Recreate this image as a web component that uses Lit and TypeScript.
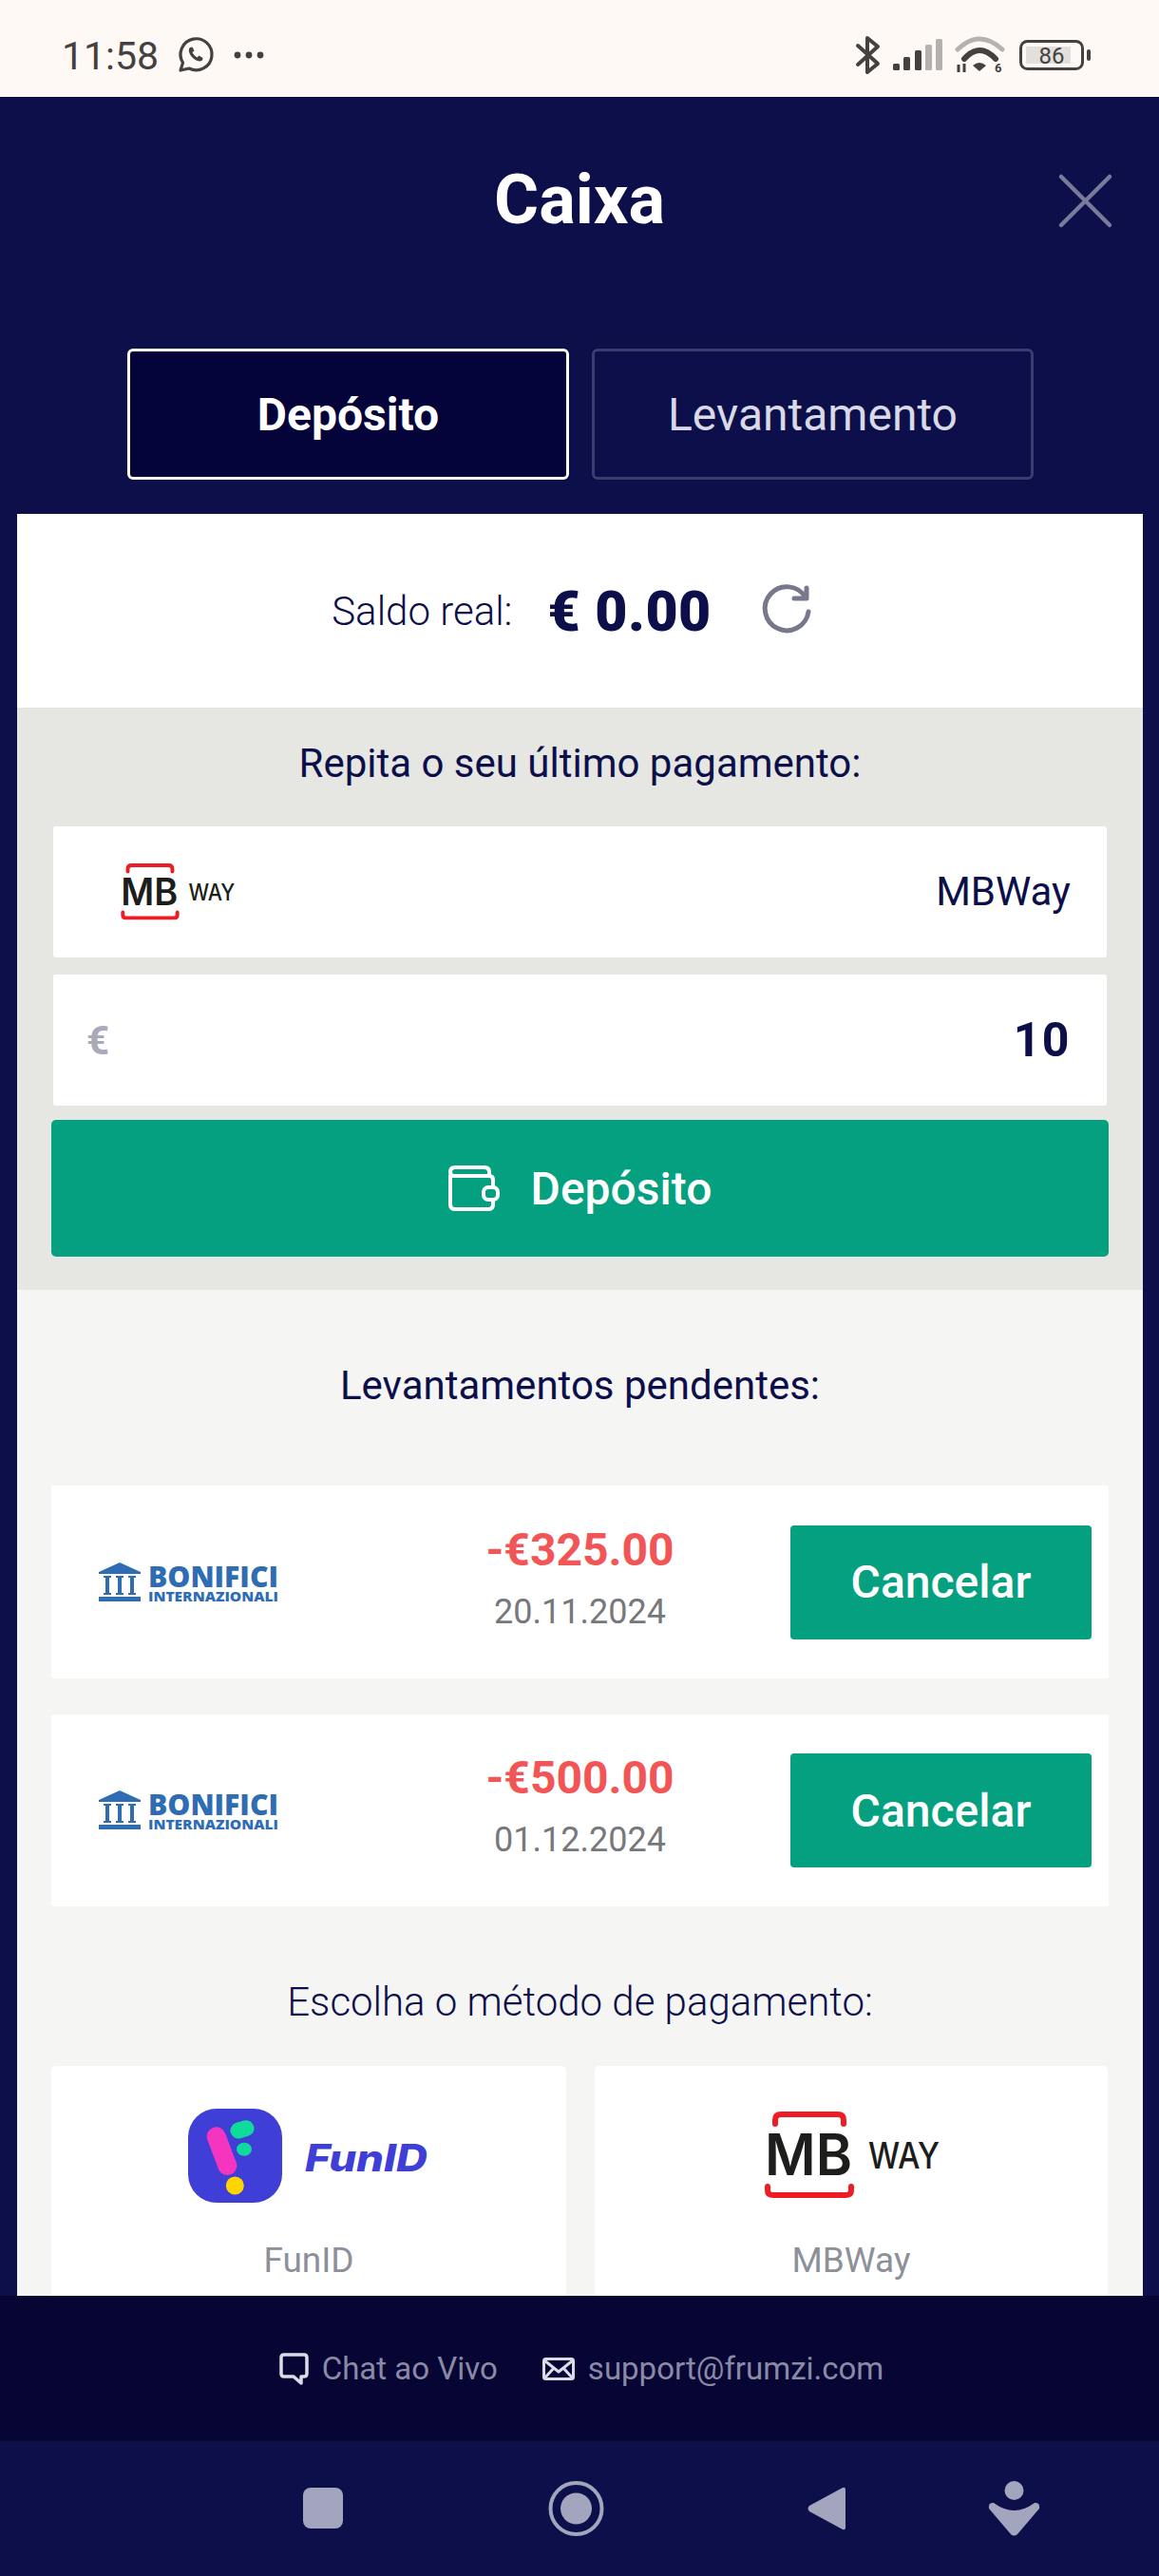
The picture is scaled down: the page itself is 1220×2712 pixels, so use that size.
import { LitElement, html, css } from "lit";
import { customElement } from "lit/decorators.js";

const mbLogo = (w: number, h: number) => html`<svg width=${w} height=${h} viewBox="0 0 185 92">
  <path d="M12 13V9Q12 3 18 3H78Q84 3 84 9V13" fill="none" stroke="#ee1c25" stroke-width="6" stroke-linecap="round"/>
  <path d="M4 79V83Q4 88 10 88H86Q92 88 92 83V79" fill="none" stroke="#ee1c25" stroke-width="6" stroke-linecap="round"/>
  <text x="1" y="67" font-family="Inter, sans-serif" font-size="60" font-weight="600" fill="#1d1d1b" textLength="92" lengthAdjust="spacingAndGlyphs">MB</text>
  <text x="110" y="60" font-family="Inter, sans-serif" font-size="38" font-weight="500" fill="#1d1d1b" textLength="75" lengthAdjust="spacingAndGlyphs">WAY</text>
</svg>`;

const bankLogo = html`<svg width="190" height="42" viewBox="0 0 190 42">
  <path d="M22 0L44 10V12H0V10Z" fill="#2e6db4"/>
  <rect x="0" y="36" width="44" height="5" fill="#2e6db4"/>
  <g fill="#2e6db4">
    <rect x="5" y="14" width="8" height="2"/><rect x="7" y="16" width="4" height="16"/><rect x="5" y="32" width="8" height="2"/>
    <rect x="18" y="14" width="8" height="2"/><rect x="20" y="16" width="4" height="16"/><rect x="18" y="32" width="8" height="2"/>
    <rect x="31" y="14" width="8" height="2"/><rect x="33" y="16" width="4" height="16"/><rect x="31" y="32" width="8" height="2"/>
  </g>
  <text x="52" y="26" font-family="'Open Sans', sans-serif" font-size="30" font-weight="800" fill="#2e6db4" textLength="137" lengthAdjust="spacingAndGlyphs">BONIFICI</text>
  <text x="52" y="41" font-family="'Open Sans', sans-serif" font-size="13.500" font-weight="800" fill="#2e6db4" textLength="137" lengthAdjust="spacingAndGlyphs">INTERNAZIONALI</text>
</svg>`;

const funLogo = html`<svg width="252" height="100" viewBox="0 0 252 100">
  <rect width="99" height="99" rx="30" fill="#3f3fd8"/>
  <path d="M29.7 29.3L41.3 60" stroke="#f535c0" stroke-width="20" stroke-linecap="round"/>
  <path d="M53 23L61 20.7" stroke="#0fdc9b" stroke-width="17" stroke-linecap="round"/>
  <ellipse cx="59" cy="42.7" rx="8" ry="7" fill="#0fdc9b"/>
  <circle cx="49.3" cy="81" r="9.5" fill="#ffd500"/>
  <text x="123" y="66" font-family="Inter, sans-serif" font-size="39" font-weight="800" font-style="italic" fill="#3f3fd8" textLength="129" lengthAdjust="spacingAndGlyphs">FunID</text>
</svg>`;

@customElement("app-root")
export class AppRoot extends LitElement {
  static styles = css`
    :host { display: flex; flex-direction: column; width: 1220px; height: 2712px; overflow: hidden; background: #0c0f4a; font-family: Roboto, sans-serif; color: #0c0f4a; }
    svg { display: block; flex: none; overflow: visible; }
    .status { height: 102px; flex: none; background: #fef9f5; display: flex; align-items: center; padding: 0 72px 0 65px; color: #444140; box-sizing: border-box; }
    .time { font-size: 41px; line-height: 46px; margin-right: 20px; margin-top: 15px; }
    .status svg { margin-top: 14px; }
    .dots { margin-left: 21px; }
    .spacer { flex: 1; }
    .stat-r { display: flex; align-items: center; }
    .ml13 { margin-left: 13px; }
    .ml14 { margin-left: 14px; }
    .ml16 { margin-left: 16px; }
    .head-row { flex: none; height: 218px; box-sizing: border-box; display: grid; grid-template-columns: 1fr auto 1fr; align-items: center; }
    .title { font-size: 72px; line-height: 84px; font-weight: 700; color: #fff; grid-column: 2; }
    .close { justify-self: end; margin-right: 49px; }
    .tabs-wrap { flex: none; height: 221px; padding: 47px 0 0 134px; box-sizing: border-box; display: flex; gap: 24px; }
    .tab { width: 465px; height: 138px; box-sizing: border-box; border-radius: 6px; display: flex; align-items: center; justify-content: center; font-size: 48px; }
    .tab.on { background: #05043a; border: 3px solid #fff; color: #fff; font-weight: 700; }
    .tab.off { border: 3px solid #3a3d70; color: #d9dae6; }
    .panel { flex: 1; min-height: 0; overflow: hidden; margin: 0 17px 0 18px; background: #f5f5f4; display: flex; flex-direction: column; }
    .balance { flex: none; height: 204px; background: #fff; display: flex; align-items: center; justify-content: center; box-sizing: border-box; padding-right: 18px; }
    .saldo { font-size: 42px; font-weight: 300; margin-right: 37px; }
    .amount { font-size: 59px; font-weight: 900; margin-right: 53px; letter-spacing: 0.5px; }
    .last { flex: none; background: #e6e6e3; height: 613px; padding: 0 36px; box-sizing: border-box; display: flex; flex-direction: column; }
    .last h2 { margin: 32px 0 0; text-align: center; font-size: 42px; line-height: 54px; font-weight: 400; height: 93px; }
    .row { height: 138px; flex: none; margin: 0 2px; background: #fff; border-radius: 3px; display: flex; align-items: center; justify-content: space-between; box-sizing: border-box; padding: 0 37px; }
    .row.method { padding-left: 70px; padding-right: 38px; margin-bottom: 18px; }
    .row .name { font-size: 42px; margin-top: -2px; }
    .row .eur { font-size: 42px; font-weight: 700; color: #a9aab9; }
    .row .val { font-size: 50px; font-weight: 700; letter-spacing: 1.5px; }
    .row.amt { margin-bottom: 15px; padding-right: 38px; padding-left: 35px; }
    .cta { height: 144px; flex: none; background: #04a080; border-radius: 5px; color: #fff; font-size: 48px; font-weight: 500; display: flex; align-items: center; justify-content: center; gap: 33px; padding-right: 0; box-sizing: border-box; }
    .pending { flex: 1; padding: 0 36px; display: flex; flex-direction: column; }
    .pending h2 { margin: 0; font-weight: 400; text-align: center; font-size: 42px; line-height: 54px; }
    .pending h2.p1 { margin-top: 74px; margin-bottom: 78px; }
    .pending h2.p2 { margin-top: 74px; margin-bottom: 40px; font-weight: 300; }
    .card { flex: none; height: 203px; background: #fff; border-radius: 3px; display: grid; grid-template-columns: 1fr auto 1fr; align-items: center; margin-bottom: 38px; }
    .card.last-c { margin-bottom: 0; height: 202px; }
    .card .logo { padding-left: 50px; }
    .mid { text-align: center; margin-top: -6px; }
    .mid .sum { font-size: 48px; line-height: 54px; font-weight: 700; color: #f25555; }
    .mid .date { font-size: 36px; line-height: 48px; margin-top: 14px; color: #77787c; }
    .cancel { justify-self: end; margin-right: 18px; width: 317px; height: 120px; background: #04a080; border-radius: 4px; color: #fff; font-size: 48px; font-weight: 500; display: flex; align-items: center; justify-content: center; }
    .methods { display: grid; grid-template-columns: 542px 540px; gap: 30px; flex: none; }
    .m { background: #fff; border-radius: 5px; height: 300px; display: flex; flex-direction: column; align-items: center; }
    .lg { height: 145px; box-sizing: border-box; padding-top: 45px; padding-right: 3px; }
    .lg.b { padding-top: 48px; padding-right: 0; }
    .m .lbl { margin-top: 36px; font-size: 37px; line-height: 48px; color: #8d9099; }
    .foot { flex: none; height: 153px; background: #070534; display: flex; align-items: center; justify-content: center; color: #8a8aa6; font-size: 33px; box-sizing: border-box; padding-left: 4px; }
    .foot span { margin-left: 14px; }
    .foot .sep { width: 47px; }
    .nav { flex: none; height: 142px; display: flex; align-items: center; padding: 0 0 0 319px; box-sizing: border-box; background: #0c0f4a; }
    .nav svg { margin-bottom: 1px; }
    .g216 { margin-left: 216px; }
    .g214 { margin-left: 214px; }
    .g151 { margin-left: 151px; }
  `;

  render() {
    return html`
      <div class="status">
        <div class="time">11:58</div>
        <svg width="38" height="36" viewBox="0 0 38 36" fill="none" stroke="#444140" stroke-width="3.2">
          <path d="M3 34L5.5 26A16.5 16.5 0 1 1 12 32Z" stroke-linejoin="round"/>
          <path d="M13 10C11 12 11.500 16 15 20S23 25.500 26 23.500L26.500 21L22.500 18.500L20.500 20.500C18.500 19.500 16.500 17.500 15.500 15L17.500 13.500L15.500 9.500Z" fill="#444140" stroke="none"/>
        </svg>
        <svg class="dots" width="32" height="8" viewBox="0 0 32 8" fill="#444140"><circle cx="4" cy="4" r="3.400"/><circle cx="16" cy="4" r="3.400"/><circle cx="28" cy="4" r="3.400"/></svg>
        <div class="spacer"></div>
        <div class="stat-r">
          <svg width="27" height="42" viewBox="0 0 27 42" fill="none" stroke="#444140" stroke-width="4" stroke-linecap="round" stroke-linejoin="round"><path d="M3 11L24 30L13 39V3L24 12L3 31"/></svg>
          <svg class="ml13" width="52" height="34" viewBox="0 0 52 34">
            <rect x="0" y="26" width="7" height="7" rx="1.500" fill="#444140"/>
            <rect x="11" y="19" width="7" height="14" rx="1.500" fill="#444140"/>
            <rect x="23" y="12" width="7" height="21" rx="1.500" fill="#444140"/>
            <rect x="34" y="6" width="7" height="27" rx="1.500" fill="#b4b1af"/>
            <rect x="45" y="0" width="7" height="33" rx="1.500" fill="#b4b1af"/>
          </svg>
          <svg class="ml14" width="51" height="38" viewBox="0 0 51 38" fill="none">
            <path d="M2 13Q25 -9 49 13" stroke="#b4b1af" stroke-width="5" stroke-linecap="round"/>
            <path d="M9 23Q25 5 42 23" stroke="#444140" stroke-width="6" stroke-linecap="round"/>
            <path d="M25 36L18 30Q25 24 32 30Z" fill="#444140"/>
            <path d="M3 29V37M9 28V37" stroke="#444140" stroke-width="3"/>
            <text x="41" y="37" font-family="Roboto, sans-serif" font-size="13" font-weight="700" fill="#444140">6</text>
          </svg>
          <svg class="ml16" width="75" height="32" viewBox="0 0 75 32">
            <rect x="1.500" y="1.500" width="65" height="29" rx="7" fill="none" stroke="#444140" stroke-width="3"/>
            <rect x="7" y="7" width="47" height="18" fill="#e2dfdc"/>
            <rect x="71" y="10" width="4" height="12" rx="2" fill="#444140"/>
            <text x="34" y="25" text-anchor="middle" font-family="Roboto, sans-serif" font-size="24" fill="#444140">86</text>
          </svg>
        </div>
      </div>
      <div class="head-row">
        <div class="title">Caixa</div>
        <svg class="close" width="57" height="57" viewBox="0 0 57 57" stroke="#7a7b9a" stroke-width="4.500" stroke-linecap="round"><path d="M3 3L54 54M54 3L3 54"/></svg>
      </div>
      <div class="tabs-wrap">
        <div class="tab on">Depósito</div>
        <div class="tab off">Levantamento</div>
      </div>
      <div class="panel">
        <div class="balance">
          <div class="saldo">Saldo real:</div>
          <div class="amount">€ 0.00</div>
          <svg width="52" height="54" viewBox="0 0 52 54" fill="none" stroke="#77788c" stroke-width="5" stroke-linecap="round"><path d="M46 13A23 23 0 1 0 49 28"/><path d="M47 3V14H34" stroke-linejoin="round"/></svg>
        </div>
        <div class="last">
          <h2>Repita o seu último pagamento:</h2>
          <div class="row method">${mbLogo(122, 60)}<div class="name">MBWay</div></div>
          <div class="row amt"><div class="eur">€</div><div class="val">10</div></div>
          <div class="cta">
            <svg width="54" height="48" viewBox="0 0 54 48" fill="none" stroke="#fff" stroke-width="4" stroke-linejoin="round"><path d="M2 10V41Q2 46 7 46H42Q47 46 47 41V15Q47 11 43 11H6Q2 11 2 7Q2 2 7 2H38Q43 2 43 7V11"/><rect x="37" y="23" width="15" height="13" rx="5" fill="#04a080"/></svg>
            <div>Depósito</div>
          </div>
        </div>
        <div class="pending">
          <h2 class="p1">Levantamentos pendentes:</h2>
          <div class="card">
            <div class="logo">${bankLogo}</div>
            <div class="mid"><div class="sum">-€325.00</div><div class="date">20.11.2024</div></div>
            <div class="cancel">Cancelar</div>
          </div>
          <div class="card last-c">
            <div class="logo">${bankLogo}</div>
            <div class="mid"><div class="sum">-€500.00</div><div class="date">01.12.2024</div></div>
            <div class="cancel">Cancelar</div>
          </div>
          <h2 class="p2">Escolha o método de pagamento:</h2>
          <div class="methods">
            <div class="m"><div class="lg">${funLogo}</div><div class="lbl">FunID</div></div>
            <div class="m"><div class="lg b">${mbLogo(185, 92)}</div><div class="lbl">MBWay</div></div>
          </div>
        </div>
      </div>
      <div class="foot">
        <svg width="31" height="34" viewBox="0 0 31 34" fill="none" stroke="#dcdce8" stroke-width="3.500" stroke-linejoin="round"><path d="M5 2H26Q29 2 29 5V22Q29 25 26 25H23V32L15 25H5Q2 25 2 22V5Q2 2 5 2Z"/></svg>
        <span>Chat ao Vivo</span>
        <div class="sep"></div>
        <svg width="34" height="24" viewBox="0 0 34 24" fill="none" stroke="#dcdce8" stroke-width="3" stroke-linejoin="round"><rect x="1.500" y="1.500" width="31" height="21" rx="2"/><path d="M2 3L17 15L32 3M2 22L12 11M32 22L22 11"/></svg>
        <span>support@frumzi.com</span>
      </div>
      <div class="nav">
        <svg width="42" height="43" viewBox="0 0 42 43"><rect width="42" height="43" rx="8" fill="#a3a4bd"/></svg>
        <svg class="g216" width="59" height="58" viewBox="0 0 59 58"><circle cx="29.500" cy="29" r="27" fill="none" stroke="#a3a4bd" stroke-width="4"/><circle cx="29.500" cy="29" r="16.500" fill="#a3a4bd"/></svg>
        <svg class="g214" width="40" height="48" viewBox="0 0 40 48"><path d="M37 2Q40 1 40 4V44Q40 47 37 46L2 27Q-1 24 2 21Z" fill="#a3a4bd"/></svg>
        <svg class="g151" width="53" height="58" viewBox="0 0 53 58" fill="#a3a4bd"><ellipse cx="26.500" cy="10" rx="10" ry="10"/><path d="M5 23Q16 31 26.500 31T48 23Q54 22 53 29L30 56Q26.500 59 23 56L0 29Q-1 22 5 23Z"/></svg>
      </div>
    `;
  }
}
